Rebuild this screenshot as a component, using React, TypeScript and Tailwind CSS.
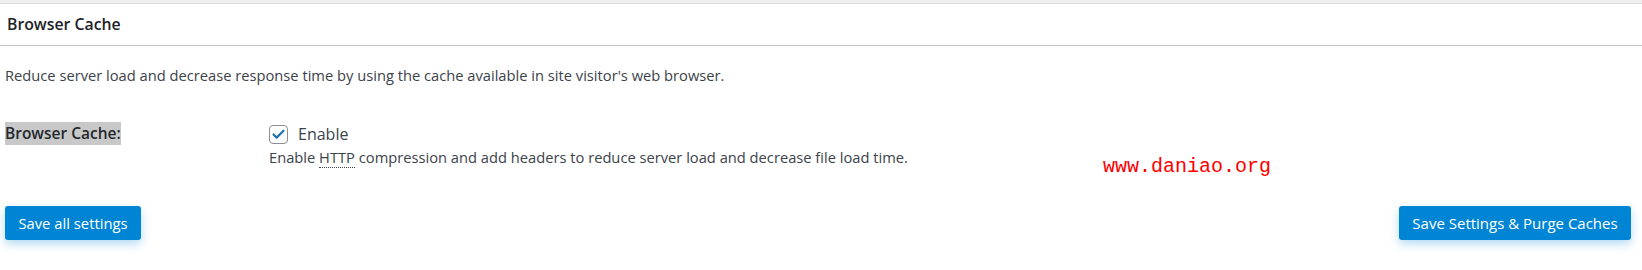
import { Check } from 'lucide-react';

export default function App() {
  const font = { fontFamily: '"Open Sans", "Noto Sans", sans-serif' };
  return (
    <div className="w-[1642px] h-[270px] bg-white text-[#3c434a]" style={font}>
      <div className="h-[3px] bg-[#f0f0f1] border-b border-[#dcdcde] box-content" />
      {/* Heading */}
      <div className="h-[42px] border-b border-[#c3c4c7] flex items-center pl-[7px]">
        <h2 className="text-[15.8px] font-semibold text-[#1d2327]">Browser Cache</h2>
      </div>

      <p className="text-[14.7px] pl-[5px] mt-[20px] leading-[18px]">
        Reduce server load and decrease response time by using the cache available in site visitor's web browser.
      </p>

      {/* Setting row */}
      <div className="flex mt-[37px] h-[70px]">
        <div className="w-[269px] shrink-0 pl-[5px]">
          <span className="inline-block bg-[#c8c8c8] text-[15.5px] font-semibold text-[#23282d] leading-[23px]">
            Browser Cache:
          </span>
        </div>
        <div className="w-[834px] shrink-0 flex flex-col">
          <label className="flex items-center gap-[10px] mt-[3px]">
            <span className="w-[19px] h-[19px] border border-[#8c8f94] rounded-[4px] flex items-center justify-center bg-white">
              <Check className="w-[15px] h-[15px] text-[#2271b1]" strokeWidth={3.5} />
            </span>
            <span className="text-[16px] leading-[20px]">Enable</span>
          </label>
          <p className="text-[14.7px] leading-[18px] mt-[4px] text-[#3c434a]">
            Enable{' '}
            <abbr className="no-underline border-b border-dotted border-[#3c434a]" title="Hypertext Transfer Protocol">
              HTTP
            </abbr>{' '}
            compression and add headers to reduce server load and decrease file load time.
          </p>
        </div>
        <div className="mt-[36px] text-[#ff0000] text-[20px] leading-[20px]" style={{ fontFamily: '"Liberation Mono", monospace' }}>
          www.daniao.org
        </div>
      </div>

      {/* Buttons */}
      <div className="flex justify-between pl-[5px] pr-[11px] mt-[15px]">
        <button className="h-[34px] w-[136px] bg-[#0085d5] text-white text-[14.8px] rounded-[3px] shadow-[0_4px_10px_rgba(0,133,213,0.3)]">
          Save all settings
        </button>
        <button className="h-[34px] w-[232px] bg-[#0085d5] text-white text-[15px] rounded-[3px] shadow-[0_4px_10px_rgba(0,133,213,0.3)]">
          Save Settings &amp; Purge Caches
        </button>
      </div>
    </div>
  );
}
